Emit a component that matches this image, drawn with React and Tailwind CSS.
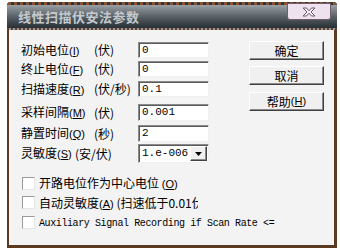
import React from "react";

const cjk = { fontFamily: '"Noto Sans CJK SC", "Liberation Sans", sans-serif' };

function Mn({ c }) {
  return (
    <span className="text-[11px]" style={{ fontFamily: '"Liberation Sans", sans-serif' }}>
      (<span className="underline">{c}</span>)
    </span>
  );
}

function Field({ value }) {
  return (
    <div className="w-[71px] h-full bg-white border-t border-l border-t-[#8a8a8a] border-l-[#8a8a8a] border-b border-r border-b-[#f0f0f0] border-r-[#f0f0f0] shadow-[inset_1px_1px_0_#5a5a5a] flex items-center pl-[3px] text-[11px] leading-none text-black"
      style={{ fontFamily: '"Liberation Mono", monospace' }}>
      {value}
    </div>
  );
}

function Row({ name, m, unitW, nameW, unit, value, cls }) {
  return (
    <div className={"flex items-center " + cls}>
      <span className="whitespace-nowrap text-[12px] leading-none" style={{ ...cjk, width: nameW }}>
        {name}<Mn c={m} />
      </span>
      <span className="whitespace-nowrap text-[12px] leading-none" style={{ ...cjk, width: unitW }}>
        {unit}
      </span>
      <Field value={value} />
    </div>
  );
}

function Btn({ children, cls }) {
  return (
    <div className={"w-[75px] h-[19px] bg-[#f0f0f0] border border-t-white border-l-white border-r-[#404040] border-b-[#404040] shadow-[inset_-1px_-1px_0_#8a8a8a] flex items-center justify-center text-[12px] leading-none text-black " + cls} style={cjk}>
      {children}
    </div>
  );
}

function Check({ children, cls }) {
  return (
    <div className={"flex items-center h-[13px] " + cls}>
      <div className="ml-[1px] w-[13px] h-[13px] bg-white border border-t-[#9a9a9a] border-l-[#9a9a9a] border-r-[#e6e6e6] border-b-[#e6e6e6] shrink-0" />
      <div className="ml-[4px] whitespace-nowrap text-[12px] leading-[16px] text-black" style={cjk}>
        {children}
      </div>
    </div>
  );
}

export default function App() {
  return (
    <div className="w-[340px] h-[251px] bg-white overflow-hidden">
      <div className="relative ml-[7px] mt-[2px] w-[330px] h-[246px] flex flex-col rounded-t-[4px] overflow-hidden bg-[#5a3a20]">
        <div className="h-[28px] shrink-0 border-t-[3px] border-t-[#8a5230] border-b-2 border-b-[#6b4226] border-dotted bg-gradient-to-b from-[#9aa0a4] via-[#5a6268] to-[#283036] flex items-center pl-[11px]">
          <span className="text-[13px] font-bold leading-none text-[#c4c9ce] tracking-[0.5px]" style={cjk}>
            线性扫描伏安法参数
          </span>
        </div>
        <div className="absolute left-[280px] top-[1px] w-[44px] h-[17px] bg-[#eee2ef] border border-[#6e5e6e] rounded-b-[3px] flex items-center justify-center">
          <svg width="14" height="10" viewBox="0 0 14 10">
            <path d="M1,1 L4.5,1 L7,3.8 L9.5,1 L13,1 L9,5 L13,9 L9.5,9 L7,6.2 L4.5,9 L1,9 L5,5 Z" fill="#f4f0f6" stroke="#6a586a" strokeWidth="1" />
          </svg>
        </div>
        <div className="flex-1 ml-[2px] mr-[3px] mb-[3px] bg-[#f3f3f3] flex flex-col pl-[12px]">
          <div className="flex items-start">
            <div className="flex flex-col w-[188px] pt-[12px]">
              <Row name="初始电位" m="I" unit="(伏)" value="0" nameW="73px" unitW="44px" cls="h-[16px]" />
              <Row name="终止电位" m="F" unit="(伏)" value="0" nameW="73px" unitW="44px" cls="h-[16px] mt-[3px]" />
              <Row name="扫描速度" m="R" unit="(伏/秒)" value="0.1" nameW="73px" unitW="44px" cls="h-[16px] mt-[4px]" />
              <Row name="采样间隔" m="M" unit="(伏)" value="0.001" nameW="73px" unitW="44px" cls="h-[17px] mt-[7px]" />
              <Row name="静置时间" m="Q" unit="(秒)" value="2" nameW="73px" unitW="44px" cls="h-[17px] mt-[4px]" />
              <div className="flex items-center h-[19px] mt-[2px]">
                <span className="whitespace-nowrap text-[12px] leading-none w-[54px]" style={cjk}>
                  灵敏度<Mn c="S" />
                </span>
                <span className="whitespace-nowrap text-[12px] leading-none w-[63px]" style={cjk}>(安/伏)</span>
                <div className="w-[71px] h-full bg-white border-t border-l border-t-[#8a8a8a] border-l-[#8a8a8a] border-b border-r border-b-[#f0f0f0] border-r-[#f0f0f0] shadow-[inset_1px_1px_0_#5a5a5a] flex items-center">
                  <span className="flex-1 pl-[3px] text-[11px] leading-none" style={{ fontFamily: '"Liberation Mono", monospace' }}>1.e-006</span>
                  <div className="w-[17px] h-[15px] mr-[1px] bg-[#f0f0f0] border border-t-white border-l-white border-r-[#404040] border-b-[#404040] shadow-[inset_-1px_-1px_0_#8a8a8a] flex items-center justify-center">
                    <svg width="7" height="4" viewBox="0 0 7 4"><path d="M0,0 L7,0 L3.5,4 Z" fill="#000" /></svg>
                  </div>
                </div>
              </div>
            </div>
            <div className="ml-[40px] pt-[11px] flex flex-col">
              <Btn>确定</Btn>
              <Btn cls="mt-[6px]">取消</Btn>
              <Btn cls="mt-[7px]">帮助 <Mn c="H" /></Btn>
            </div>
          </div>
          <Check cls="mt-[14px]">
            开路电位作为中心电位 <Mn c="O" />
          </Check>
          <Check cls="mt-[6px]">
            <div className="w-[159px] h-[16px] overflow-hidden">自动灵敏度<Mn c="A" /> (扫速低于0.01伏/秒时)</div>
          </Check>
          <Check cls="mt-[7px]">
            <span className="text-[10px] tracking-[-0.4px]" style={{ fontFamily: '"Liberation Mono", monospace' }}>
              Auxiliary Signal Recording if Scan Rate &lt;=
            </span>
          </Check>
        </div>
      </div>
    </div>
  );
}
